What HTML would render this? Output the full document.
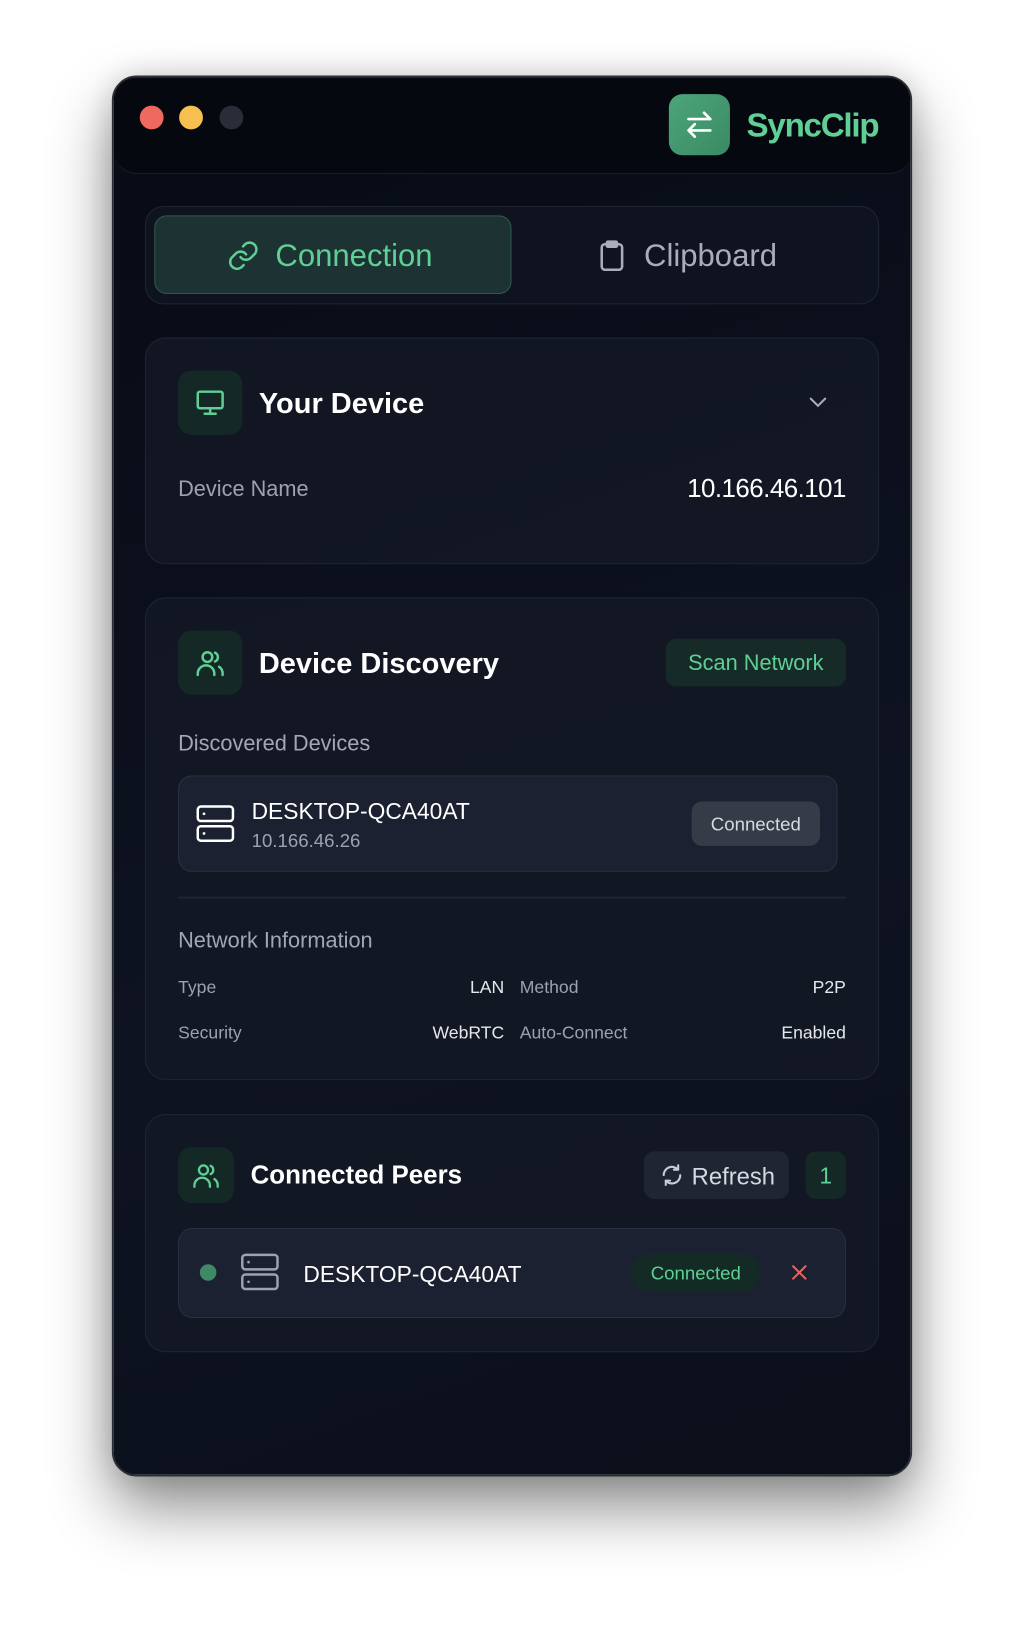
<!DOCTYPE html>
<html><head><meta charset="utf-8"><style>
*{box-sizing:border-box;margin:0;padding:0}
html,body{width:1024px;height:1624px;background:#fff;overflow:hidden;font-family:"Liberation Sans",sans-serif}
#s{position:absolute;left:0;top:1px;width:989px;height:1568px;transform:scale(1.0354);transform-origin:0 0}
.a{position:absolute}
.win{left:108px;top:72px;width:773px;height:1353px;border-radius:24px;background:linear-gradient(160deg,#080b14,#0e1322 60%,#0b0f1a);border:2px solid #2a2d33;box-shadow:0 30px 60px rgba(0,0,0,.45),0 0 30px rgba(0,0,0,.15);overflow:hidden}
.card{background:rgba(20,25,38,.75);border:1.5px solid #1f2534;border-radius:20px}
.ib{background:#142826;border-radius:13px}
.t{color:#fff;white-space:nowrap}
.g{color:#5fcf95}
.m{color:#9ea2ae}
</style></head><body><div id="s">
<div class="a win">
 <div class="a" style="left:0;top:0;width:771px;height:93px;background:#05080f;border-bottom:1.5px solid #1b1f2a;border-radius:0 0 22px 22px"></div>
 <div class="a" style="left:25px;top:27px;width:23px;height:23px;border-radius:50%;background:#ee6a5f"></div>
 <div class="a" style="left:63px;top:27px;width:23px;height:23px;border-radius:50%;background:#f5c04f"></div>
 <div class="a" style="left:102px;top:27px;width:23px;height:23px;border-radius:50%;background:#2a2d38"></div>
 <div class="a" style="left:536px;top:16px;width:59px;height:59px;border-radius:13px;background:linear-gradient(135deg,#4da57a,#3a8a63)">
  <svg width="59" height="59" viewBox="0 0 59 59" fill="none" stroke="#fff" stroke-width="2.6" stroke-linecap="round" stroke-linejoin="round"><path d="M19 24h21M34 18l6 6M40 35H19M25 29l-6 6l6 6"/></svg></div>
 <div class="a g" style="left:611px;top:28px;font-size:32px;font-weight:bold;color:#5fcf95;letter-spacing:-1.2px">SyncClip</div>
</div>
<!-- tabs -->
<div class="a card" style="left:140px;top:198px;width:709px;height:95px;border-radius:18px;background:#0f1320"></div>
<div class="a" style="left:149px;top:207px;width:345px;height:76px;border-radius:12px;background:#1d3333;border:1.5px solid #2f5a48"></div>
<svg class="a" style="left:219px;top:230px" width="32" height="32" viewBox="0 0 24 24" fill="none" stroke="#5fcf95" stroke-width="1.8" stroke-linecap="round"><path d="M10 13a5 5 0 0 0 7.5.5l3-3a5 5 0 0 0-7-7l-1.7 1.7"/><path d="M14 11a5 5 0 0 0-7.5-.5l-3 3a5 5 0 0 0 7 7l1.7-1.7"/></svg>
<div class="a g" style="left:266px;top:230px;font-size:30px">Connection</div>
<svg class="a" style="left:576px;top:230px" width="30" height="32" viewBox="0 0 24 26" fill="none" stroke="#a9adbb" stroke-width="2" stroke-linejoin="round"><rect x="4" y="4" width="16" height="20" rx="2.5"/><rect x="8" y="2" width="8" height="4" rx="1"/></svg>
<div class="a" style="left:622px;top:230px;font-size:30px;color:#a9adbb">Clipboard</div>
<!-- card1 -->
<div class="a card" style="left:140px;top:325px;width:709px;height:219px"></div>
<div class="a ib" style="left:172px;top:357px;width:62px;height:62px"></div>
<svg class="a" style="left:187px;top:372px" width="32" height="32" viewBox="0 0 24 24" fill="none" stroke="#5fcf95" stroke-width="1.8" stroke-linecap="round"><rect x="3" y="4" width="18" height="12" rx="1.5"/><path d="M12 16v4M8 20h8"/></svg>
<div class="a t" style="left:250px;top:373px;font-size:28px;font-weight:bold">Your Device</div>
<svg class="a" style="left:780px;top:380px" width="20" height="14" viewBox="0 0 20 14" fill="none" stroke="#a9adbb" stroke-width="2" stroke-linecap="round"><path d="M3 4l7 7l7-7"/></svg>
<div class="a m" style="left:172px;top:460px;font-size:21px">Device Name</div>
<div class="a t" style="right:172px;top:457px;font-size:25px;letter-spacing:-.5px">10.166.46.101</div>
<!-- card2 -->
<div class="a card" style="left:140px;top:576px;width:709px;height:466px"></div>
<div class="a ib" style="left:172px;top:608px;width:62px;height:62px"></div>
<svg class="a" style="left:187px;top:623px" width="32" height="32" viewBox="0 0 24 24" fill="none" stroke="#5fcf95" stroke-width="1.8" stroke-linecap="round"><circle cx="10" cy="8" r="3.5"/><path d="M3 21v-1a6 6 0 0 1 12 0v1M15.5 4.8a3.5 3.5 0 0 1 0 6.4M18.5 15a6 6 0 0 1 2.5 5v1"/></svg>
<div class="a t" style="left:250px;top:624px;font-size:28px;font-weight:bold">Device Discovery</div>
<div class="a" style="left:643px;top:616px;width:174px;height:46px;border-radius:10px;background:#162b27;color:#5fcf95;font-size:21px;text-align:center;line-height:48px">Scan Network</div>
<div class="a m" style="left:172px;top:706px;font-size:21px;color:#a3a7b3">Discovered Devices</div>
<div class="a" style="left:172px;top:748px;width:637px;height:93px;border-radius:13px;background:#1b2130;border:1.5px solid #2a3040"></div>
<svg class="a" style="left:189px;top:776px" width="38" height="38" viewBox="0 0 38 38" fill="none" stroke="#fff" stroke-width="2.4"><rect x="2" y="2" width="34" height="14" rx="3"/><rect x="2" y="21" width="34" height="14" rx="3"/><path d="M8 9h.1M8 28h.1" stroke-linecap="round" stroke-width="2.6"/></svg>
<div class="a t" style="left:243px;top:770px;font-size:22px">DESKTOP-QCA40AT</div>
<div class="a m" style="left:243px;top:801px;font-size:18px">10.166.46.26</div>
<div class="a" style="left:668px;top:773px;width:124px;height:43px;border-radius:10px;background:#363b48;color:#d6d9e0;font-size:18px;text-align:center;line-height:45px">Connected</div>
<div class="a" style="left:172px;top:865px;width:645px;height:2px;background:#1f2534"></div>
<div class="a m" style="left:172px;top:896px;font-size:21px;color:#a3a7b3">Network Information</div>
<div class="a m" style="left:172px;top:943px;font-size:17px">Type</div>
<div class="a t" style="right:502px;top:943px;font-size:17px;color:#e6e7ea">LAN</div>
<div class="a m" style="left:502px;top:943px;font-size:17px">Method</div>
<div class="a t" style="right:172px;top:943px;font-size:17px;color:#e6e7ea">P2P</div>
<div class="a m" style="left:172px;top:987px;font-size:17px">Security</div>
<div class="a t" style="right:502px;top:987px;font-size:17px;color:#e6e7ea">WebRTC</div>
<div class="a m" style="left:502px;top:987px;font-size:17px">Auto-Connect</div>
<div class="a t" style="right:172px;top:987px;font-size:17px;color:#e6e7ea">Enabled</div>
<!-- card3 -->
<div class="a card" style="left:140px;top:1075px;width:709px;height:230px"></div>
<div class="a ib" style="left:172px;top:1107px;width:54px;height:54px"></div>
<svg class="a" style="left:184px;top:1119px" width="30" height="30" viewBox="0 0 24 24" fill="none" stroke="#5fcf95" stroke-width="1.8" stroke-linecap="round"><circle cx="10" cy="8" r="3.5"/><path d="M3 21v-1a6 6 0 0 1 12 0v1M15.5 4.8a3.5 3.5 0 0 1 0 6.4M18.5 15a6 6 0 0 1 2.5 5v1"/></svg>
<div class="a t" style="left:242px;top:1120px;font-size:25px;font-weight:bold">Connected Peers</div>
<div class="a" style="left:622px;top:1111px;width:140px;height:46px;border-radius:10px;background:#1f2533"></div>
<svg class="a" style="left:637px;top:1122px" width="24" height="24" viewBox="0 0 24 24" fill="none" stroke="#c9ccd4" stroke-width="2" stroke-linecap="round" stroke-linejoin="round"><path d="M20 12a8 8 0 0 1-14 5.3M4 12a8 8 0 0 1 14-5.3"/><path d="M18 2.5v4.2h-4.2M6 21.5v-4.2h4.2"/></svg>
<div class="a" style="left:668px;top:1122px;font-size:23px;color:#d6d9e0">Refresh</div>
<div class="a" style="left:778px;top:1111px;width:39px;height:46px;border-radius:10px;background:#142826;color:#5fcf95;font-size:22px;text-align:center;line-height:48px">1</div>
<div class="a" style="left:172px;top:1185px;width:645px;height:87px;border-radius:14px;background:#1b2130;border:1.5px solid #2a3040"></div>
<div class="a" style="left:193px;top:1220px;width:16px;height:16px;border-radius:50%;background:#3f8a66"></div>
<svg class="a" style="left:232px;top:1209px" width="38" height="38" viewBox="0 0 38 38" fill="none" stroke="#9ea2ae" stroke-width="2.4"><rect x="2" y="2" width="34" height="14" rx="3"/><rect x="2" y="21" width="34" height="14" rx="3"/><path d="M8 9h.1M8 28h.1" stroke-linecap="round" stroke-width="2.6"/></svg>
<div class="a t" style="left:293px;top:1217px;font-size:22px">DESKTOP-QCA40AT</div>
<div class="a" style="left:610px;top:1210px;width:124px;height:37px;border-radius:19px;background:#142a25;color:#5fcf95;font-size:18px;text-align:center;line-height:39px">Connected</div>
<svg class="a" style="left:764px;top:1220px" width="16" height="16" viewBox="0 0 16 16" stroke="#e0685f" stroke-width="2" stroke-linecap="round"><path d="M2 2l12 12M14 2L2 14"/></svg>
</div></body></html>
